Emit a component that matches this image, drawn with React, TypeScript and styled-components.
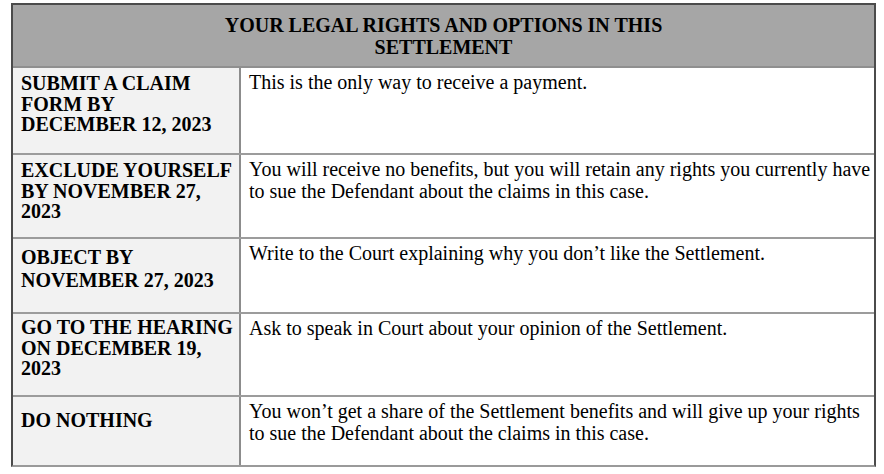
import React from 'react'
import styled, { createGlobalStyle } from 'styled-components'

const GlobalStyle = createGlobalStyle`
  html, body {
    margin: 0;
    padding: 0;
    background: #ffffff;
  }
  body {
    font-family: 'Liberation Serif', 'Times New Roman', serif;
    color: #000000;
  }
`

interface IRightsRow {
  action: string[]
  detail: string[]
  height: number
  // shift of the action text, as in the printed notice
  offset?: number
  leading?: number
}

const rows: IRightsRow[] = [
  {
    action: ['SUBMIT A CLAIM', 'FORM BY', 'DECEMBER 12, 2023'],
    detail: ['This is the only way to receive a payment.'],
    height: 85,
  },
  {
    action: ['EXCLUDE YOURSELF', 'BY NOVEMBER 27,', '2023'],
    detail: [
      'You will receive no benefits, but you will retain any rights you currently have',
      'to sue the Defendant about the claims in this case.',
    ],
    height: 82,
  },
  {
    action: ['OBJECT BY', 'NOVEMBER 27, 2023'],
    detail: ['Write to the Court explaining why you don’t like the Settlement.'],
    height: 73,
    offset: 2,
    leading: 23,
  },
  {
    action: ['GO TO THE HEARING', 'ON DECEMBER 19,', '2023'],
    detail: ['Ask to speak in Court about your opinion of the Settlement.'],
    height: 81,
    offset: -2,
  },
  {
    action: ['DO NOTHING'],
    detail: [
      'You won’t get a share of the Settlement benefits and will give up your rights',
      'to sue the Defendant about the claims in this case.',
    ],
    height: 68,
    offset: 8,
  },
]

export default function App() {
  return (
    <>
      <GlobalStyle />
      <Page>
        <RightsTable>
          <Header>
            <Line>YOUR LEGAL RIGHTS AND OPTIONS IN THIS</Line>
            <Line>SETTLEMENT</Line>
          </Header>
          {rows.map((row, index) => (
            <Row key={index} $height={row.height}>
              <ActionCell>
                <ActionText $offset={row.offset || 0} $leading={row.leading || 20.5}>
                  {row.action.map((line, i) => (
                    <Line key={i}>{line}</Line>
                  ))}
                </ActionText>
              </ActionCell>
              <DetailCell>
                {row.detail.map((line, i) => (
                  <Line key={i}>{line}</Line>
                ))}
              </DetailCell>
            </Row>
          ))}
        </RightsTable>
      </Page>
    </>
  )
}

const Page = styled.div`
  padding: 3px 0 0 11px;
`
const RightsTable = styled.div`
  width: 861px;
  border-top: 2px solid #4b4b4b;
  border-left: 2px solid #4b4b4b;
  border-right: 2px solid #4b4b4b;
  border-bottom: 2px solid #9a9a9a;
  display: flex;
  flex-direction: column;
`
const Line = styled.div`
  white-space: nowrap;
`
const Header = styled.div`
  height: 63px;
  box-sizing: border-box;
  padding-top: 9px;
  background: #a6a6a6;
  text-align: center;
  font-weight: bold;
  font-size: 20px;
  line-height: 22px;
  border-bottom: 2px solid #8f8f8f;
`
const Row = styled.div<{ $height: number }>`
  display: grid;
  grid-template-columns: 228px 1fr;
  height: ${p => p.$height}px;
  & + & {
    border-top: 2px solid #9c9c9c;
  }
`
const ActionCell = styled.div`
  background: #f2f2f2;
  border-right: 2px solid #8c8c8c;
  padding: 5px 0 0 8px;
  font-weight: bold;
  font-size: 20px;
  overflow: hidden;
`
const ActionText = styled.div<{ $offset: number; $leading: number }>`
  margin-top: ${p => p.$offset}px;
  line-height: ${p => p.$leading}px;
`
const DetailCell = styled.div`
  padding: 3px 0 0 8px;
  font-size: 20px;
  line-height: 22px;
  overflow: hidden;
`
